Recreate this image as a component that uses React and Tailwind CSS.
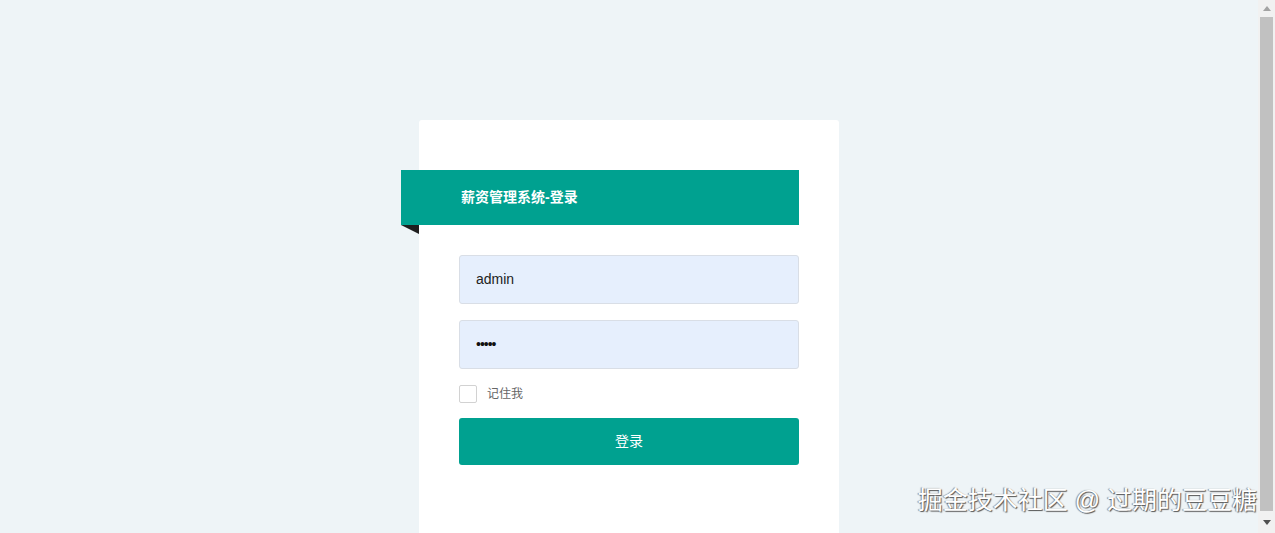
export default function App() {
    return (
        <div className="flex h-[533px] w-full overflow-hidden bg-[#eef4f7]" style={{ fontFamily: '"Liberation Sans", "Noto Sans CJK SC", sans-serif' }}>
            {/* page */}
            <div className="relative flex flex-1 justify-center pt-[120px]">
                <div className="w-[420px] h-[460px] rounded-[3px] bg-white pt-[50px] pl-10 pr-[40px]">
                    {/* banner */}
                    <div className="relative -ml-[58px] w-[398px]">
                        <div className="flex h-[55px] items-center bg-[#00a190] pl-[60px] text-[14px] font-bold text-white">
                            薪资管理系统-登录
                        </div>
                        <svg width="18" height="10" className="block">
                            <polygon points="0,0 18,0 18,9" fill="#1f1f1f" />
                        </svg>
                    </div>

                    <div className="mt-5 flex flex-col">
                        <div className="flex h-[49px] items-center rounded-[3px] border border-[#d9dee6] bg-[#e6effd] px-4 text-[14px] text-[#222]">
                            admin
                        </div>
                        <div className="mt-4 flex h-[49px] items-center rounded-[3px] border border-[#d9dee6] bg-[#e6effd] px-4 text-[14px] tracking-[-1px] text-[#111]">
                            •••••
                        </div>
                        <div className="mt-4 flex items-center gap-[10px]">
                            <div className="h-[18px] w-[18px] rounded-[2px] border border-[#d2d2d2] bg-white" />
                            <span className="text-[12px] text-[#666]">记住我</span>
                        </div>
                        <button className="mt-[15px] flex h-[47px] items-center justify-center rounded-[3px] bg-[#00a190] text-[14px] text-white">
                            登录
                        </button>
                    </div>
                </div>

                <div
                    className="absolute bottom-[14px] right-[1px] text-[25px] text-white"
                    style={{ textShadow: '1px 1px 1px #555, -1px 0 1px #888' }}
                >
                    掘金技术社区 @ 过期的豆豆糖
                </div>
            </div>

            {/* scrollbar */}
            <div className="flex w-[17px] flex-col bg-[#f1f1f1]">
                <div className="flex h-[17px] items-center justify-center">
                    <svg width="8" height="5"><polygon points="0,5 8,5 4,0" fill="#a3a3a3" /></svg>
                </div>
                <div className="mx-[2px] flex-1 bg-[#c1c1c1]" />
                <div className="flex h-[22px] items-center justify-center">
                    <svg width="8" height="5"><polygon points="0,0 8,0 4,5" fill="#505050" /></svg>
                </div>
            </div>
        </div>
    );
}
